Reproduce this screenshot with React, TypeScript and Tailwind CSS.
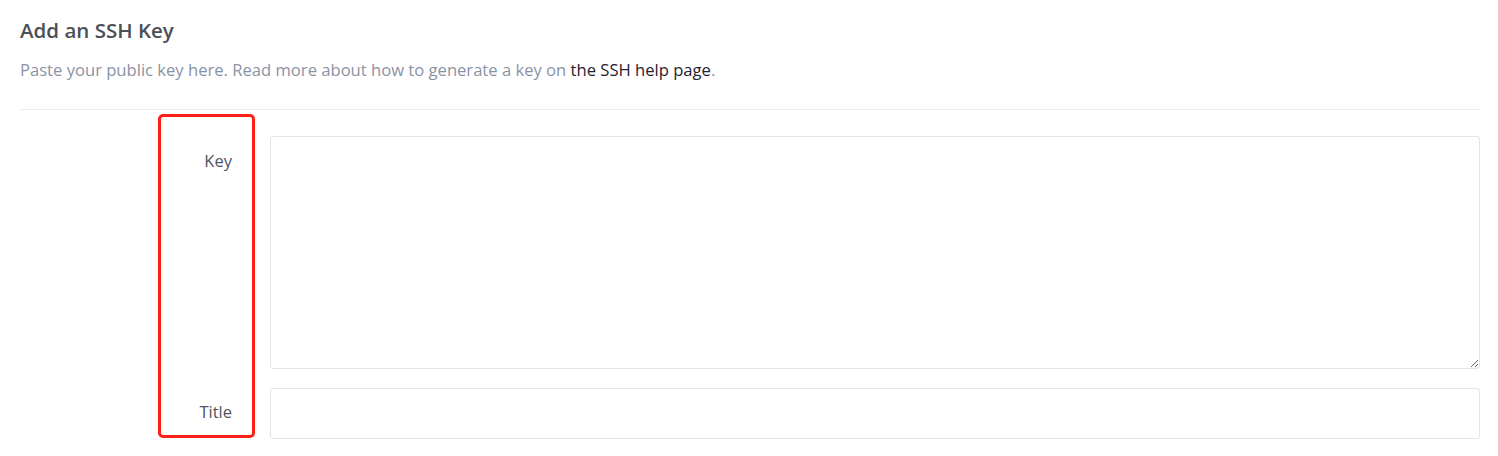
export default function App() {
  return (
    <div className="w-[1498px] h-[456px] bg-white font-['Open_Sans','Noto_Sans',sans-serif]">
      <div className="pl-5 pr-[18px] pt-[17px]">
        <h3 className="text-[20.5px] leading-[26px] font-semibold text-[#4b4f56]">Add an SSH Key</h3>
        <p className="mt-[15px] text-[16.6px] leading-[24px] text-[#8a93a4]">
          Paste your public key here. Read more about how to generate a key on{' '}
          <a href="#" className="text-[#1f2230]">the SSH help page</a>.
        </p>
        <div className="mt-[27px] border-t border-[#ececec]" />
      </div>

      <div className="flex pl-5 pr-[18px]">
        <div className="w-[250px] shrink-0">
          <div className="ml-[138px] mt-[4px] flex h-[324px] w-[97px] flex-col justify-between rounded-[5px] border-[3px] border-[#ff2015] pr-[20px] pt-[32px] pb-[11px] text-right text-[16.5px] leading-[24px] text-[#4f5564]">
            <label>Key</label>
            <label>Title</label>
          </div>
        </div>
        <div className="flex flex-1 flex-col gap-[19px] pt-[26px]">
          <textarea className="h-[233px] w-full rounded-[3px] border border-[#e4e5ea] outline-none" />
          <input className="h-[51px] w-full rounded-[3px] border border-[#e4e5ea] outline-none" />
        </div>
      </div>
    </div>
  );
}
